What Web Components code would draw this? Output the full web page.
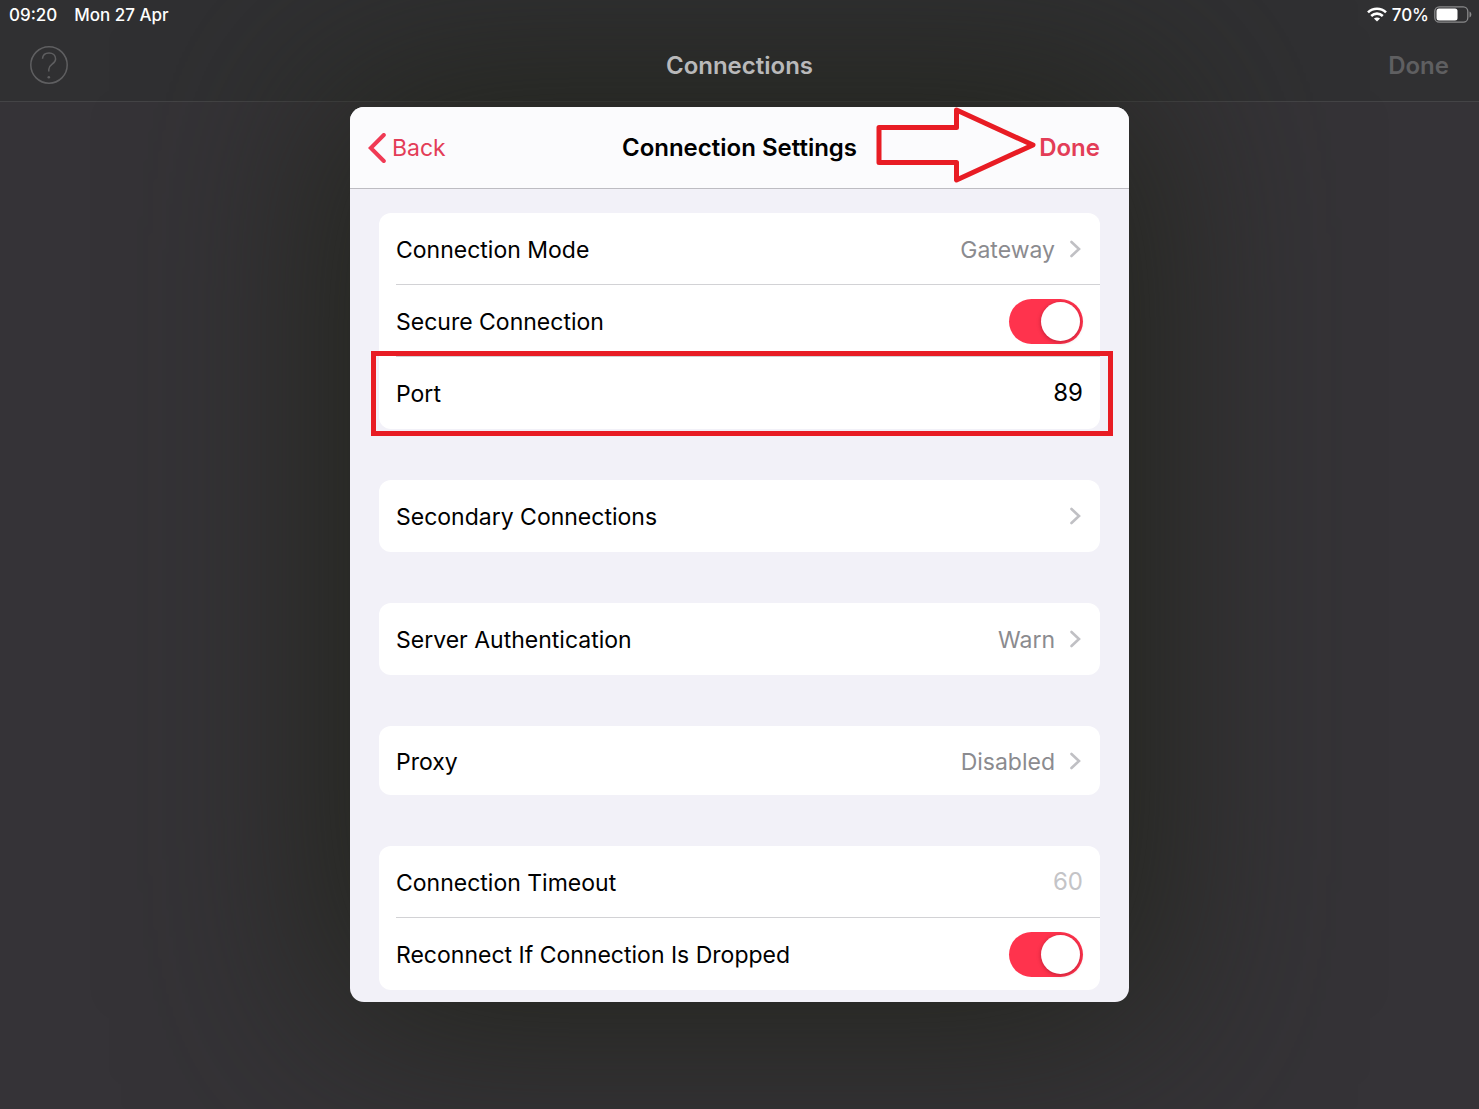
<!DOCTYPE html>
<html lang="en">
<head>
<meta charset="utf-8">
<meta name="viewport" content="width=device-width, initial-scale=1">
<title>Connection Settings</title>
<style>
  :root {
    --accent: #ff334d;
    --accent-text: #e33d57;
    --mark: #e81c24;
    --line: #d2d2d5;
    --group-bg: #f2f1f8;
  }

  body {
    margin: 0;
    min-height: 100vh;
    overflow: hidden;
    background: #353337;
    font-family: Inter, "Liberation Sans", sans-serif;
    font-size: 23px;
    line-height: 32px;
  }
</style>
</head>
<body>
  <status-bar time="09:20" date="Mon 27 Apr" battery="70%"></status-bar>
  <page-header heading="Connections"></page-header>

  <settings-dialog heading="Connection Settings">
    <settings-group>
      <nav-row label="Connection Mode" value="Gateway"></nav-row>
      <toggle-row label="Secure Connection"></toggle-row>
      <field-row label="Port" value="89" marked></field-row>
    </settings-group>
    <settings-group>
      <nav-row label="Secondary Connections"></nav-row>
    </settings-group>
    <settings-group>
      <nav-row label="Server Authentication" value="Warn"></nav-row>
    </settings-group>
    <settings-group>
      <nav-row label="Proxy" value="Disabled" compact></nav-row>
    </settings-group>
    <settings-group>
      <field-row label="Connection Timeout" placeholder="60"></field-row>
      <toggle-row label="Reconnect If Connection Is Dropped"></toggle-row>
    </settings-group>
  </settings-dialog>

<script>
class StatusBar extends HTMLElement {
  constructor() {
    super();
    this.attachShadow({ mode: "open" });
  }

  connectedCallback() {
    this.shadowRoot.innerHTML = `
      <style>
        :host {
          display: flex;
          justify-content: space-between;
          align-items: center;
          height: 29px;
          padding: 0 7px 0 9px;
          background: #303032;
          color: #fff;
          font-size: 17px;
          font-weight: 500;
          line-height: 20px;
        }

        .left { display: flex; gap: 17px; }
        .right { display: flex; align-items: center; gap: 5px; }
        svg { display: block; }
      </style>
      <div class="left">
        <span>${this.getAttribute("time")}</span>
        <span>${this.getAttribute("date")}</span>
      </div>
      <div class="right">
        <svg width="20" height="15" viewBox="0 0 20 15" fill="none" stroke="#fff" stroke-width="2.6">
          <path d="M1 5.4 C6 .5 14 .5 19 5.4"/>
          <path d="M4.2 9 C7.6 5.8 12.4 5.8 15.8 9"/>
          <path d="M10 14.6 L6.9 11.6 C8.7 10 11.3 10 13.1 11.6 Z" fill="#fff" stroke="none"/>
        </svg>
        <span>${this.getAttribute("battery")}</span>
        <svg width="38" height="17" viewBox="0 0 38 17">
          <rect x=".8" y=".8" width="33" height="15.4" rx="4.5" fill="none" stroke="#89898b" stroke-width="1.3"/>
          <rect x="2.5" y="2.5" width="21" height="12" rx="2.5" fill="#fff"/>
          <path d="M35.5 5.5 C38 6.8 38 10.2 35.5 11.5 Z" fill="#89898b"/>
        </svg>
      </div>
    `;
  }
}
customElements.define("status-bar", StatusBar);


class PageHeader extends HTMLElement {
  constructor() {
    super();
    this.attachShadow({ mode: "open" });
  }

  connectedCallback() {
    this.shadowRoot.innerHTML = `
      <style>
        :host {
          display: grid;
          grid-template-columns: 1fr auto 1fr;
          align-items: center;
          height: 72px;
          padding: 0 30px;
          background: #303032;
          border-bottom: 1px solid #444446;
          color: #b9b9ba;
        }

        /* keeps the heading above the dialog's shadow */
        h1 {
          position: relative;
          z-index: 1;
          margin: 0;
          padding-top: 2px;
          font-size: 24px;
          font-weight: 600;
        }

        button {
          padding: 0;
          border: none;
          background: none;
          font: inherit;
          font-size: 24px;
          font-weight: 600;
          color: #5f5f61;
          cursor: pointer;
        }

        .help { justify-self: start; }
        .done { justify-self: end; padding-top: 2px; }
        svg { display: block; }
      </style>
      <button class="help" aria-label="Help">
        <svg width="38" height="38" viewBox="0 0 38 38" fill="none" stroke="#5f5f61" stroke-width="1.5">
          <circle cx="19" cy="19" r="18.2"/>
          <path d="M12.5 12.8 C12.8 9 15.5 7 19 7 C22.8 7 25.6 9.4 25.6 12.9 C25.6 18.2 18.8 18.2 18.8 23.2 V25.5"/>
          <circle cx="18.8" cy="31.2" r="1.3" fill="#5f5f61" stroke="none"/>
        </svg>
      </button>
      <h1>${this.getAttribute("heading")}</h1>
      <button class="done">Done</button>
    `;
  }
}
customElements.define("page-header", PageHeader);


class SettingsDialog extends HTMLElement {
  constructor() {
    super();
    this.attachShadow({ mode: "open" });
  }

  connectedCallback() {
    this.shadowRoot.innerHTML = `
      <style>
        :host {
          display: block;
          padding: 5px 16px;
        }

        section {
          position: relative;
          max-width: 779px;
          margin: 0 auto;
          border-radius: 14px;
          background: var(--group-bg);
          box-shadow: 0 0 200px 20px #22241c;
        }

        header {
          display: grid;
          grid-template-columns: 1fr auto 1fr;
          align-items: center;
          height: 81px;
          padding: 0 29px 0 18px;
          background: #fbfbfd;
          border-bottom: 1px solid #bdbcc2;
          border-radius: 14px 14px 0 0;
        }

        h2 {
          margin: 0 0 0 11px;
          font-size: 24px;
          font-weight: 600;
          color: #000;
        }

        button {
          padding: 0;
          border: none;
          background: none;
          font: inherit;
          color: var(--accent-text);
          cursor: pointer;
        }

        .back {
          justify-self: start;
          display: flex;
          align-items: center;
          gap: 6px;
        }

        .done {
          position: relative;
          justify-self: end;
          font-size: 24px;
          font-weight: 600;
        }

        /* arrow lies over the header and points at Done */
        .arrow {
          position: absolute;
          right: calc(100% + 3px);
          top: 50%;
          margin-top: -41px;
        }

        svg { display: block; }

        .content {
          display: flex;
          flex-direction: column;
          gap: 51px;
          padding: 24px 29px 12px;
        }
      </style>
      <section role="dialog" aria-label="${this.getAttribute("heading")}">
        <header>
          <button class="back">
            <svg width="18" height="30" viewBox="0 0 18 30" fill="none" stroke="#f03a54" stroke-width="4" stroke-linecap="round" stroke-linejoin="miter">
              <path d="M15.8 2 L2.8 15 L15.8 28"/>
            </svg>
            Back
          </button>
          <h2>${this.getAttribute("heading")}</h2>
          <button class="done">
            <svg class="arrow" width="160" height="76" viewBox="0 0 160 76" fill="none" stroke="#e81c24" stroke-width="5" stroke-linejoin="round" aria-hidden="true">
              <path d="M3 20.5 H80.5 V3 L157 38 L80.5 73 V55.5 H3 Z"/>
            </svg>
            Done
          </button>
        </header>
        <div class="content"><slot></slot></div>
      </section>
    `;
  }
}
customElements.define("settings-dialog", SettingsDialog);


class SettingsGroup extends HTMLElement {
  constructor() {
    super();
    this.attachShadow({ mode: "open" });
    this.shadowRoot.innerHTML = `
      <style>
        :host {
          display: block;
          border-radius: 12px;
          background: #fff;
        }

        /* separator starts at the label, not at the card's edge */
        ::slotted(:not(:last-child)) {
          background: linear-gradient(var(--line), var(--line)) 17px 100% / 100% 1px no-repeat;
        }
      </style>
      <slot></slot>
    `;
  }
}
customElements.define("settings-group", SettingsGroup);


// styles that every row has
const rowStyle = `
  :host {
    display: block;
    position: relative;
    color: #000;
  }

  .row {
    box-sizing: border-box;
    display: flex;
    align-items: center;
    justify-content: space-between;
    width: 100%;
    height: 72px;
    padding: 0 17px;
  }

  .text { padding-top: 2px; }

  :host([compact]) .row { height: 69px; }
`;

class NavRow extends HTMLElement {
  constructor() {
    super();
    this.attachShadow({ mode: "open" });
  }

  connectedCallback() {
    this.shadowRoot.innerHTML = `
      <style>
        ${rowStyle}
        button {
          border: none;
          background: none;
          font: inherit;
          color: inherit;
          text-align: left;
          cursor: pointer;
        }

        .value {
          display: flex;
          align-items: center;
          gap: 13px;
          color: #8b8b8f;
        }
      </style>
      <button class="row">
        <span class="text">${this.getAttribute("label")}</span>
        <span class="value">
          <span class="text">${this.getAttribute("value") || ""}</span>
          <svg width="15" height="20" viewBox="0 0 15 20" fill="none" stroke="#c0c0c4" stroke-width="2.6" stroke-linecap="round">
            <path d="M3.5 3 L11 10 L3.5 17"/>
          </svg>
        </span>
      </button>
    `;
  }
}
customElements.define("nav-row", NavRow);


class ToggleRow extends HTMLElement {
  constructor() {
    super();
    this.attachShadow({ mode: "open" });
  }

  connectedCallback() {
    this.shadowRoot.innerHTML = `
      <style>
        ${rowStyle}
        input {
          appearance: none;
          display: flex;
          align-items: center;
          box-sizing: border-box;
          width: 74px;
          height: 45px;
          margin: 0;
          padding: 0 3px;
          border-radius: 23px;
          background: #e3e3e6;
          cursor: pointer;
        }

        input::before {
          content: "";
          width: 39px;
          height: 39px;
          border-radius: 50%;
          background: #fff;
          box-shadow: 0 1px 4px rgba(90, 0, 20, 0.4);
        }

        input:checked {
          justify-content: flex-end;
          background: var(--accent);
        }
      </style>
      <div class="row">
        <label class="text" for="toggle">${this.getAttribute("label")}</label>
        <input id="toggle" type="checkbox" role="switch" checked>
      </div>
    `;
  }
}
customElements.define("toggle-row", ToggleRow);


class FieldRow extends HTMLElement {
  constructor() {
    super();
    this.attachShadow({ mode: "open" });
  }

  connectedCallback() {
    this.shadowRoot.innerHTML = `
      <style>
        ${rowStyle}
        input {
          width: 120px;
          padding: 0;
          border: none;
          outline: none;
          background: none;
          font: inherit;
          font-size: 24px;
          color: inherit;
          text-align: right;
        }

        input::placeholder { color: #c4c4c7; }

        /* red frame drawn over the row and a little outside the card */
        :host([marked])::after {
          content: "";
          position: absolute;
          inset: -6px -13px -7px -8px;
          border: 5px solid var(--mark);
          pointer-events: none;
        }
      </style>
      <div class="row">
        <label class="text" for="field">${this.getAttribute("label")}</label>
        <input id="field" type="text" inputmode="numeric"
          value="${this.getAttribute("value") || ""}"
          placeholder="${this.getAttribute("placeholder") || ""}">
      </div>
    `;
  }
}
customElements.define("field-row", FieldRow);
</script>
</body>
</html>
